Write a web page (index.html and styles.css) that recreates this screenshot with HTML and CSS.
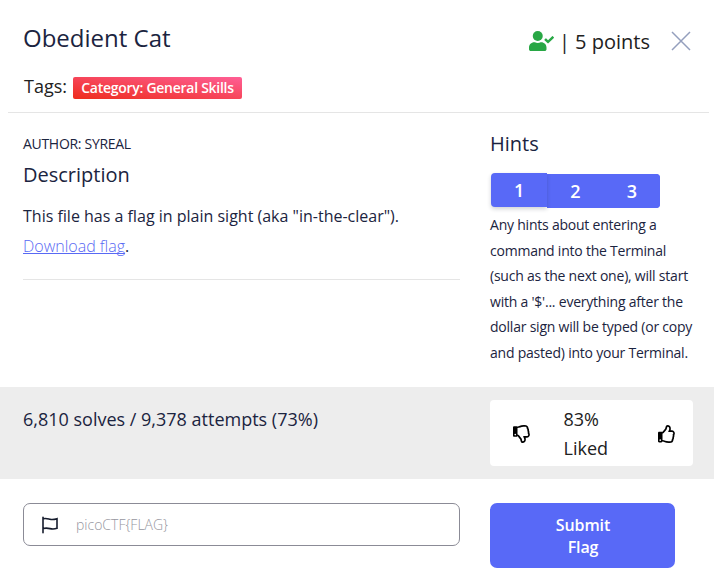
FILE: index.html
```html
<!DOCTYPE html>
<html lang="en">
<head><meta charset="utf-8"><title>Obedient Cat</title><link rel="stylesheet" href="styles.css"></head>
<body>
<main class="modal">
  <header class="header">
    <div class="title-row">
      <h1>Obedient Cat</h1>
      <div class="points">
        <svg class="user" viewBox="0 0 640 512"><circle cx="224" cy="128" r="128"/><path d="M313.600 288h-16.700c-22.200 10.200-46.900 16-72.900 16s-50.600-5.800-72.900-16h-16.700C60.200 288 0 348.200 0 422.400V464c0 26.500 21.500 48 48 48h352c26.500 0 48-21.500 48-48v-41.600c0-74.200-60.200-134.400-134.400-134.400zM636.600 159.600l-27.800-28.200c-4.600-4.700-12.100-4.700-16.800-.1l-104.800 104-45.500-45.800c-4.600-4.700-12.100-4.700-16.800-.1l-28.100 27.900c-4.700 4.600-4.700 12.100-.1 16.800l81.700 82.300c4.600 4.700 12.100 4.700 16.800.1l141.300-140.200c4.600-4.700 4.700-12.200.1-16.800z"/></svg>
        <span>| 5 points</span>
      </div>
      <button class="close" aria-label="Close"><svg viewBox="0 0 20 20"><path d="M1 1l18 18M19 1L1 19"/></svg></button>
    </div>
    <div class="tags"><span>Tags:</span><span class="tag">Category: General Skills</span></div>
  </header>
  <div class="content">
    <section class="details">
      <div class="author">AUTHOR: SYREAL</div>
      <h2>Description</h2>
      <p class="description">This file has a flag in plain sight (aka "in-the-clear").<br><a href="#">Download flag</a>.</p>
    </section>
    <section class="hints">
      <h2>Hints</h2>
      <div class="hint-buttons"><button class="active">1</button><button>2</button><button>3</button></div>
      <p>Any hints about entering a<br>command into the Terminal<br>(such as the next one), will start<br>with a '$'... everything after the<br>dollar sign will be typed (or copy<br>and pasted) into your Terminal.</p>
    </section>
  </div>
  <div class="stats">
    <div class="solves">6,810 solves / 9,378 attempts (73%)</div>
    <div class="rating">
      <svg class="thumb down" viewBox="0 0 512 512"><path d="M466.270 225.310c4.674-22.647.864-44.538-8.990-62.990 2.958-23.868-4.021-48.565-17.340-66.990C438.986 39.423 404.117 0 327 0c-7 0-15 .010-22.220.010C201.195.010 168.997 40 128 40h-10.845c-5.640-4.975-13.042-8-21.155-8H32C14.327 32 0 46.327 0 64v240c0 17.673 14.327 32 32 32h64c11.842 0 22.175-6.438 27.708-16h7.052c19.146 16.953 46.013 60.653 68.760 83.400 13.667 13.667 10.153 108.600 71.760 108.600 57.580 0 95.270-31.936 95.270-104.730 0-18.410-3.930-33.730-8.850-46.540h36.480c48.602 0 85.820-41.565 85.820-85.580 0-19.150-4.960-34.990-13.730-49.840zM64 296c-13.255 0-24-10.745-24-24s10.745-24 24-24 24 10.745 24 24-10.745 24-24 24zm330.180 16.730H290.190c0 37.820 28.360 55.370 28.360 94.540 0 23.750 0 56.730-47.270 56.730-18.910-18.910-9.460-66.180-37.820-94.540C206.900 342.890 167.280 272 138.920 272H128V85.830c53.611 0 100.001-37.820 171.640-37.820h37.820c35.512 0 60.820 17.120 53.120 65.900 15.200 8.160 26.500 36.440 13.940 57.570 21.581 20.384 18.699 51.065 5.210 65.620 9.450 0 22.360 18.910 22.270 37.810-.090 18.910-16.710 37.820-37.820 37.820z"/></svg>
      <div>83%<br>Liked</div>
      <svg class="thumb up" viewBox="0 0 512 512"><path d="M466.270 286.690C475.040 271.840 480 256 480 236.850c0-44.015-37.218-85.580-85.820-85.580H357.700c4.920-12.810 8.850-28.130 8.850-46.540C366.550 31.936 328.860 0 271.280 0c-61.607 0-58.093 94.933-71.760 108.600-22.747 22.747-49.615 66.447-68.760 83.400H32c-17.673 0-32 14.327-32 32v240c0 17.673 14.327 32 32 32h64c14.893 0 27.408-10.174 30.978-23.950 44.509 1.001 75.060 39.940 177.802 39.940 7.220 0 15.220.010 22.220.010 77.117 0 111.986-39.423 112.940-95.330 13.319-18.425 20.299-43.122 17.340-66.990 9.854-18.452 13.664-40.343 8.990-62.990zm-61.750 53.830c12.560 21.130 1.260 49.410-13.940 57.570 7.700 48.780-17.608 65.900-53.120 65.900h-37.820c-71.639 0-118.029-37.820-171.640-37.820V240h10.920c28.360 0 67.980-70.890 94.540-97.460 28.360-28.360 18.910-75.630 37.820-94.540 47.270 0 47.270 32.980 47.270 56.730 0 39.170-28.360 56.720-28.360 94.540h103.990c21.110 0 37.730 18.910 37.820 37.820.090 18.900-12.820 37.810-22.270 37.810 13.489 14.555 16.371 45.236-5.210 65.620zM88 432c0 13.255-10.745 24-24 24s-24-10.745-24-24 10.745-24 24-24 24 10.745 24 24z"/></svg>
    </div>
  </div>
  <form class="submission" onsubmit="return false">
    <label class="flag-field"><svg viewBox="0 0 18 18"><path d="M2 1.200v15.600M2 2.800c3-1 5 0 7 .5s4 .3 7-.6v9.600c-3 1-5 .8-7 .3s-4-1-7 0"/></svg><input placeholder="picoCTF{FLAG}" aria-label="Flag"></label>
    <button class="submit">Submit<br>Flag</button>
  </form>
</main>
</body>
</html>
```
FILE: styles.css
```css
* { box-sizing: border-box; }
body { margin: 0; background: #fff; color: #1b2440; font-family: "Open Sans", "Noto Sans", sans-serif; }
h1, h2, p { margin: 0; font-weight: 400; }
button, input { font-family: inherit; border: 0; padding: 0; }
.modal { width: 714px; height: 578px; overflow: hidden; }
.header { height: 113px; margin: 0 5px 0 8px; padding: 20px 18px 0 15px; border-bottom: 1px solid #e5e5e5; }
.title-row { display: flex; height: 42px; }
h1 { font-size: 24px; line-height: 36px; flex: 1; }
.points { display: flex; gap: 5px; font-size: 20px; line-height: 43px; color: #212121; }
.user { width: 25px; height: 20px; margin-top: 11px; fill: #28a745; }
.close { width: 20px; height: 20px; margin: 11px 0 0 21px; background: none; }
.close svg { display: block; width: 20px; height: 20px; fill: none; stroke: #949fbd; stroke-width: 1.500; }
.tags { margin-top: 11px; font-size: 18px; line-height: 26px; display: flex; gap: 6px; padding-left: 1px; color: #212121; }
.tag { height: 22px; width: 169px; margin-top: 4px; text-align: center; color: #fff; border-radius: 2px; background: linear-gradient(to top right, #ee2c1c, #ff5f96); font-size: 14px; line-height: 21px; font-weight: 600; letter-spacing: -.27px; white-space: nowrap; }
.content { display: grid; grid-template-columns: 437px 210px; column-gap: 30px; padding: 0 23px; height: 274px; }
.details { height: 167px; padding-top: 20px; border-bottom: 1px solid #e5e5e5; }
.author { font-size: 14px; line-height: 21px; letter-spacing: -.3px; }
h2 { font-size: 20px; line-height: 30px; }
.details h2 { margin-top: 6px; }
.description { font-size: 16px; line-height: 30px; margin-top: 11px; }
a { color: #5869f4; font-weight: 300; text-decoration-thickness: 1px; text-underline-offset: 1px; text-decoration-skip-ink: none; }
.hints { padding-top: 16px; }
.hint-buttons { display: flex; width: 169px; height: 34px; margin: 15px 0 4px 1px; border-radius: 4px; background: linear-gradient(#5869f7, #5869f7) right / 113px no-repeat; }
.hint-buttons button { flex: 1; background: #5869f7; color: #fff; font-size: 18px; font-weight: 600; }
.hint-buttons button:last-child { border-radius: 0 4px 4px 0; }
.hint-buttons .active { transform: translateY(-1px); border-radius: 4px 0 0 4px; box-shadow: 0 2px 4px #161c2d33; }
.hints p { font-size: 14px; line-height: 25.600px; letter-spacing: -.22px; white-space: nowrap; }
.stats { height: 92px; padding: 13px 21px 0 23px; background: #ededed; display: flex; justify-content: space-between; }
.solves { font-size: 18px; line-height: 39px; }
.rating { width: 203px; height: 66px; background: #fff; border-radius: 4px; display: grid; grid-template-columns: 51px 1fr 18px; align-items: center; padding: 1px 17px 0 22.500px; font-size: 18px; line-height: 29px; color: #212121; }
.thumb { width: 18px; height: 18px; fill: #000; }
.submission { display: grid; grid-template-columns: 437px 185px; column-gap: 30px; padding: 24px 23px; align-items: start; }
.flag-field { height: 43px; border: 1px solid #8b8b96; border-radius: 7px; display: flex; align-items: center; padding: 0 17px; gap: 17px; }
.flag-field svg { width: 18px; height: 18px; fill: none; stroke: #161c2d; stroke-width: 1.600; stroke-linecap: round; }
input { flex: 1; outline: 0; font-size: 14px; font-weight: 300; }
input::placeholder { color: #9696a0; }
.submit { height: 65px; border-radius: 7px; background: #5869f7; color: #fff; font-size: 16px; line-height: 22px; font-weight: 600; letter-spacing: -.1px; padding-left: 1px; }
```
